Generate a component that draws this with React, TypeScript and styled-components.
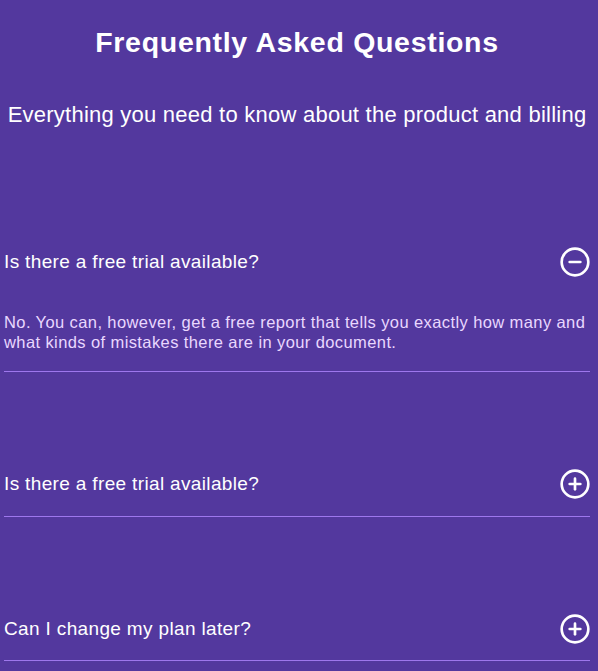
import React, { useState } from "react";
import styled, { createGlobalStyle } from "styled-components";

const GlobalStyle = createGlobalStyle`
  html, body {
    margin: 0;
    padding: 0;
    background: #53389e;
  }
  body {
    font-family: "Liberation Sans", Arial, sans-serif;
    color: #ffffff;
  }
`;

const Page = styled.main`
  box-sizing: border-box;
  width: 598px;
  min-height: 671px;
  padding: 26px 8px 10px 4px;
  background: #53389e;
  display: flex;
  flex-direction: column;
`;

const Header = styled.header`
  display: flex;
  flex-direction: column;
  align-items: center;
  text-align: center;
`;

const Title = styled.h1`
  margin: 0;
  font-size: 28.5px;
  font-weight: 700;
  line-height: 33px;
  letter-spacing: 0.7px;
  color: #ffffff;
`;

const Subtitle = styled.p`
  margin: 43px 0 0;
  font-size: 22px;
  font-weight: 400;
  line-height: 26px;
  letter-spacing: 0.24px;
  color: #ffffff;
`;

const List = styled.div`
  display: flex;
  flex-direction: column;
  margin-top: 22px;
`;

const Item = styled.div`
  padding: 96px 0 15.5px;
  border-bottom: 1px solid #9e77ed;
`;

const QuestionRow = styled.button`
  all: unset;
  box-sizing: border-box;
  width: 100%;
  height: 32px;
  display: flex;
  align-items: center;
  justify-content: space-between;
  cursor: pointer;
`;

const Question = styled.span`
  font-family: "Liberation Sans", Arial, sans-serif;
  font-size: 19px;
  line-height: 22px;
  letter-spacing: 0.35px;
  color: #ffffff;
`;

const Answer = styled.p`
  margin: 34px 0 3.5px;
  font-size: 16.5px;
  line-height: 20px;
  letter-spacing: 0.4px;
  color: #e9d7fe;
`;

const IconSvg = styled.svg`
  display: block;
  width: 32px;
  height: 32px;
  flex: none;
  margin-right: -0.5px;
`;

const ToggleIcon = ({ open }: { open: boolean }) => (
  <IconSvg
    viewBox="0 0 24 24"
    fill="none"
    stroke="#ffffff"
    strokeWidth={2}
    strokeLinecap="round"
    strokeLinejoin="round"
  >
    <circle cx="12" cy="12" r="10" />
    <line x1="8" y1="12" x2="16" y2="12" />
    {!open && <line x1="12" y1="8" x2="12" y2="16" />}
  </IconSvg>
);

const faqs = [
  {
    q: "Is there a free trial available?",
    a: "No. You can, however, get a free report that tells you exactly how many and what kinds of mistakes there are in your document.",
  },
  {
    q: "Is there a free trial available?",
    a: "No. You can, however, get a free report that tells you exactly how many and what kinds of mistakes there are in your document.",
  },
  {
    q: "Can I change my plan later?",
    a: "Yes. You can upgrade or downgrade your plan at any time from your account settings.",
  },
];

export default function App() {
  const [open, setOpen] = useState<number | null>(0);
  return (
    <>
      <GlobalStyle />
      <Page>
        <Header>
          <Title>Frequently Asked Questions</Title>
          <Subtitle>Everything you need to know about the product and billing</Subtitle>
        </Header>
        <List>
          {faqs.map((f, i) => (
            <Item key={i}>
              <QuestionRow onClick={() => setOpen(open === i ? null : i)}>
                <Question>{f.q}</Question>
                <ToggleIcon open={open === i} />
              </QuestionRow>
              {open === i && <Answer>{f.a}</Answer>}
            </Item>
          ))}
        </List>
      </Page>
    </>
  );
}
